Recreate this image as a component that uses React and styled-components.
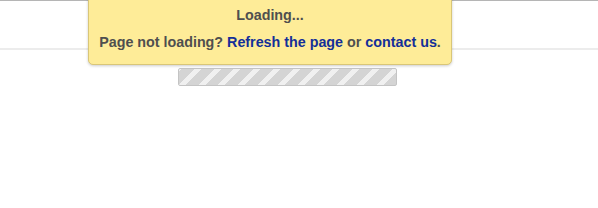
import React from "react";
import styled, { createGlobalStyle } from "styled-components";

const Global = createGlobalStyle`
  body {
    margin: 0;
    background: #fff;
    font-family: "Liberation Sans", Arial, sans-serif;
  }
`;

const Page = styled.div`
  position: relative;
  width: 598px;
  height: 208px;
  overflow: hidden;
`;

const Header = styled.header`
  height: 47px;
  border-top: 1px solid #b5b5b5;
  border-bottom: 2px solid #ececec;
`;

const Notice = styled.div`
  position: absolute;
  top: -4px;
  left: 88px;
  width: 364px;
  height: 69px;
  box-sizing: border-box;
  padding-top: 10px;
  background: #feec98;
  border: 1px solid #d9c678;
  border-radius: 0 0 5px 5px;
  box-shadow: 0 1px 3px rgba(0, 0, 0, 0.2);
  text-align: center;
  color: #4f4f4f;
  font-weight: bold;
  font-size: 14.3px;
  line-height: 17px;
`;

const Line = styled.p`
  margin: ${(p) => (p.$first ? "0 0 10px" : "0")};
`;

const Link = styled.a`
  color: #132f99;
  text-decoration: none;
`;

const Bar = styled.div`
  margin: 18px 0 0 178px;
  width: 219px;
  height: 18px;
  box-sizing: border-box;
  border: 1px solid #c4c4c4;
  border-radius: 2px;
  background: repeating-linear-gradient(
    -45deg,
    #d4d4d4 0 9px,
    #f0f0f0 9px 14px
  );
`;

export default function App() {
  return (
    <Page>
      <Global />
      <Header />
      <Bar />
      <Notice>
        <Line $first>Loading...</Line>
        <Line>
          Page not loading? <Link href="#">Refresh the page</Link> or{" "}
          <Link href="#">contact us</Link>.
        </Line>
      </Notice>
    </Page>
  );
}
